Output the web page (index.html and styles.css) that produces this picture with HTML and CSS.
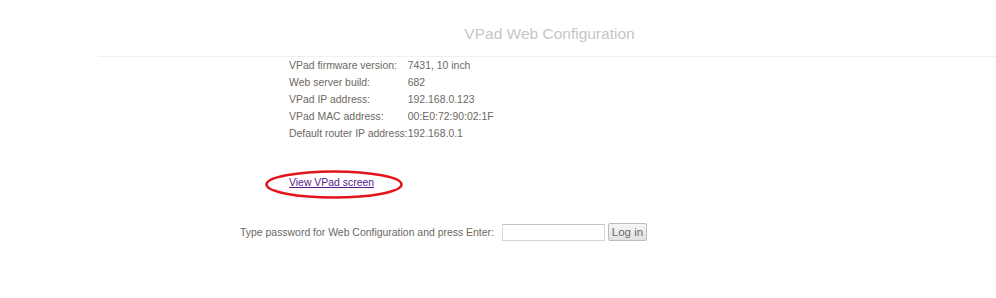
FILE: index.html
```html
<!DOCTYPE html>
<html lang="en">
<head>
  <meta charset="UTF-8" />
  <title>VPad Web Configuration</title>
  <link rel="stylesheet" href="styles.css">
</head>
<body>

  <!-- Header -->
  <div class="header">
    <h1>VPad Web Configuration</h1>
  </div>

  <!-- Device info -->
  <table class="info">
    <tr><td>VPad firmware version:</td><td>7431, 10 inch</td></tr>
    <tr><td>Web server build:</td><td>682</td></tr>
    <tr><td>VPad IP address:</td><td>192.168.0.123</td></tr>
    <tr><td>VPad MAC address:</td><td>00:E0:72:90:02:1F</td></tr>
    <tr><td>Default router IP address:</td><td>192.168.0.1</td></tr>
  </table>

  <div class="screen-link">
    <a href="#">View VPad screen</a>
    <svg class="ring" width="140" height="31" viewBox="0 0 140 31">
      <ellipse cx="70" cy="15.5" rx="67.5" ry="13" fill="none" stroke="#e3151b" stroke-width="2.6"/>
    </svg>
  </div>

  <!-- Login -->
  <form class="login" onsubmit="return false">
    <label for="pwd">Type password for Web Configuration and press Enter:</label>
    <input type="password" id="pwd" />
    <button type="submit">Log in</button>
  </form>

</body>
</html>
```

FILE: styles.css
```css
* { margin: 0; padding: 0; box-sizing: border-box; }
body { font-family: "Liberation Sans", Arial, sans-serif; font-size: 10.45px; color: #6d6862; background: #fff; }

.header { margin-left: 98px; height: 57px; border-bottom: 1px solid #f1f1f1; text-align: center; padding: 25px 0 0 5px; }
.header h1 { font-size: 15.5px; font-weight: normal; line-height: 18px; color: #c6c6c6; }

.info { margin-left: 289px; border-collapse: collapse; }
.info td { padding: 0; line-height: 17px; height: 17px; white-space: nowrap; }

.screen-link { position: relative; margin: 32px 0 0 289px; width: 90px; line-height: 17px; }
.screen-link a { color: #551a8b; }
.screen-link .ring { position: absolute; left: -25px; top: -5px; pointer-events: none; }

.login { display: flex; align-items: center; margin: 32px 0 0 240px; }
.login label { margin-right: 8px; line-height: 17px; }
.login input { width: 103px; height: 17px; border: 1px solid #d6d6d6; border-top-color: #c4c4c4; font-size: 11px; }
.login button {
  margin-left: 3px; width: 39px; height: 18px; font-family: "Liberation Sans", Arial, sans-serif; font-size: 11.5px; color: #6d6862;
  background: linear-gradient(#f6f6f6, #e2e2e2); border: 1px solid #bdbdbd; border-radius: 2px;
}
```
